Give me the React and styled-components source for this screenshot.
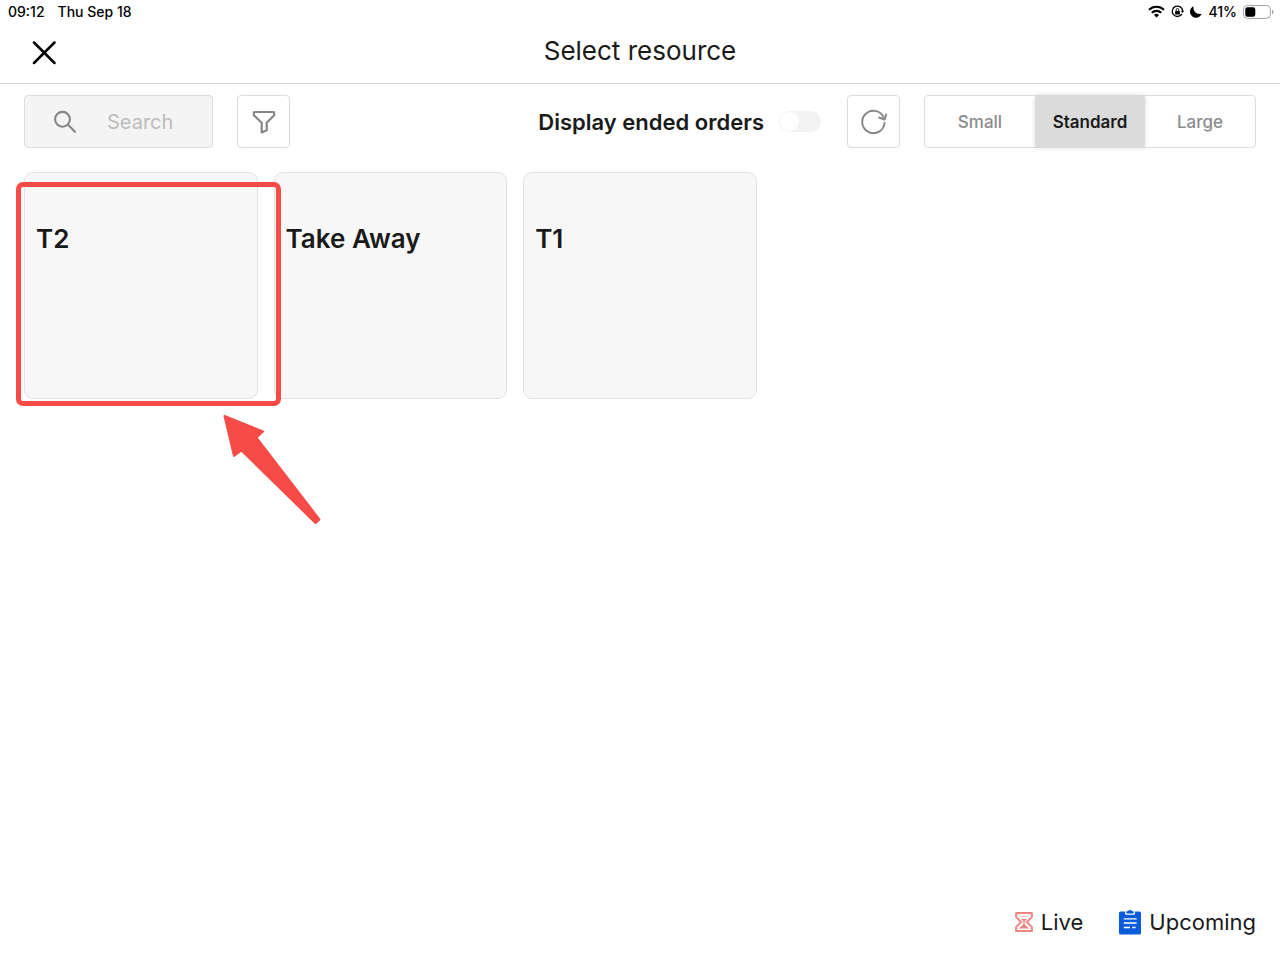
import React, { useState } from 'react';
import styled, { createGlobalStyle } from 'styled-components';

const GlobalStyle = createGlobalStyle`
  * {
    box-sizing: border-box;
  }
  body {
    margin: 0;
    background: #fff;
    color: #1a1a1a;
    font-family: Inter, 'Liberation Sans', sans-serif;
  }
  button, input {
    font-family: inherit;
  }
`;

const Page = styled.div`
  display: flex;
  flex-direction: column;
  min-height: 100vh;
`;

const StatusBar = styled.div`
  display: flex;
  align-items: center;
  justify-content: space-between;
  height: 23px;
  padding: 0 6px 0 8px;
  color: #000;
  font-size: 14px;
  font-weight: 500;
`;

const StatusGroup = styled.div`
  display: flex;
  align-items: center;
  gap: ${props => props.$gap}px;
`;

const Header = styled.header`
  display: grid;
  grid-template-columns: 1fr auto 1fr;
  align-items: center;
  height: 61px;
  padding: 0 32px;
  border-bottom: 1px solid #d4d4d4;
`;

const Title = styled.h1`
  margin: 0;
  padding-bottom: 4px;
  font-size: 26px;
  font-weight: 400;
  line-height: 32px;
`;

const CloseButton = styled.button`
  display: flex;
  justify-self: start;
  padding: 0;
  border: 0;
  background: none;
  color: #000;
  cursor: pointer;
`;

const Toolbar = styled.div`
  display: flex;
  align-items: center;
  justify-content: space-between;
  padding: 11px 24px 24px;
`;

const ToolGroup = styled.div`
  display: flex;
  align-items: center;
  gap: 24px;
`;

const SearchBox = styled.label`
  display: flex;
  align-items: center;
  gap: 30px;
  width: 189px;
  height: 53px;
  padding-left: 28px;
  border: 1px solid #dcdcdc;
  border-radius: 4px;
  background: #f4f4f4;
  color: #858585;
  svg {
    flex: none;
  }
`;

const SearchInput = styled.input`
  flex: 1;
  min-width: 0;
  padding: 0;
  border: 0;
  outline: 0;
  background: none;
  color: #1a1a1a;
  font-size: 20px;
  &::placeholder {
    color: #bcbcbc;
    opacity: 1;
  }
`;

const IconButton = styled.button`
  display: flex;
  align-items: center;
  justify-content: center;
  width: 53px;
  height: 53px;
  padding: 0;
  border: 1px solid #dcdcdc;
  border-radius: 4px;
  background: #fff;
  color: #858585;
  cursor: pointer;
`;

const SwitchLabel = styled.label`
  display: flex;
  align-items: center;
  gap: 15px;
  margin-right: 2px;
  font-size: 22px;
  font-weight: 600;
`;

const Switch = styled.input`
  display: flex;
  align-items: center;
  appearance: none;
  width: 42px;
  height: 21px;
  margin: 0;
  padding: 1px;
  border-radius: 11px;
  background: #f3f3f3;
  cursor: pointer;
  &::before {
    content: '';
    width: 19px;
    height: 19px;
    border-radius: 50%;
    background: #fff;
  }
  &:checked {
    justify-content: flex-end;
    background: #0b5cdb;
  }
`;

const Segments = styled.div`
  display: grid;
  grid-template-columns: repeat(3, 1fr);
  width: 332px;
  height: 53px;
  border: 1px solid #dcdcdc;
  border-radius: 4px;
`;

const Segment = styled.button`
  margin: ${props => (props.$active ? '-1px 0' : '0')};
  padding: 0;
  border: 0;
  border-radius: 4px;
  background: ${props => (props.$active ? '#dbdbdb' : 'none')};
  box-shadow: ${props => (props.$active ? '0 0 5px rgba(0, 0, 0, 0.14)' : 'none')};
  color: ${props => (props.$active ? '#1a1a1a' : '#8c8c8c')};
  font-size: 17px;
  font-weight: ${props => (props.$active ? 600 : 500)};
  cursor: pointer;
`;

const ResourceGrid = styled.main`
  display: grid;
  grid-template-columns: repeat(5, 1fr);
  gap: 16px;
  padding: 0 24px;
`;

const ResourceCell = styled.div`
  position: relative;
  display: flex;
`;

const ResourceCard = styled.button`
  flex: 1;
  display: flex;
  min-height: 227px;
  padding: 48px 11px;
  border: 1px solid #e2e2e2;
  border-radius: 9px;
  background: #f7f7f7;
  color: #1a1a1a;
  font-size: 26px;
  font-weight: 600;
  line-height: 36px;
  text-align: left;
  cursor: pointer;
`;

// sits over the card and its neighbour's edge
const Highlight = styled.div`
  position: absolute;
  z-index: 1;
  top: 10px;
  right: -23px;
  bottom: -7px;
  left: -8px;
  border: 5px solid #f64b47;
  border-radius: 7px;
  pointer-events: none;
`;

const Arrow = styled.svg`
  position: absolute;
  z-index: 1;
  top: 242px;
  left: 198px;
  pointer-events: none;
`;

const Footer = styled.footer`
  display: flex;
  justify-content: flex-end;
  gap: 36px;
  margin-top: auto;
  padding: 0 24px 22px;
`;

const FooterButton = styled.button`
  display: flex;
  align-items: center;
  gap: 8px;
  padding: 0;
  border: 0;
  background: none;
  color: #1a1a1a;
  font-size: 22px;
  line-height: 32px;
  cursor: pointer;
`;

const WifiIcon = () => (
  <svg width="17" height="13" viewBox="0 0 17 13" fill="none" stroke="#000" strokeWidth="2.2">
    <path d="M1 4.8a10.7 10.7 0 0 1 15 0" />
    <path d="M3.8 7.8a6.7 6.7 0 0 1 9.4 0" />
    <path d="M8.5 12.6 6 10a3.6 3.6 0 0 1 5 0z" fill="#000" stroke="none" />
  </svg>
);

const LockIcon = () => (
  <svg width="13" height="13" viewBox="0 0 13 13" fill="none" stroke="#000">
    <path d="M11 8.9A5.2 5.2 0 1 1 11.7 6" strokeWidth="1.3" />
    <path d="M9.9 5.7h3.4l-1.7 2.2z" fill="#000" stroke="none" />
    <rect x="4.1" y="5.9" width="4.8" height="3.6" rx="0.6" fill="#000" stroke="none" />
    <path d="M5.2 6V4.8a1.3 1.3 0 0 1 2.6 0V6" strokeWidth="0.9" />
  </svg>
);

const MoonIcon = () => (
  <svg width="12" height="12" viewBox="0 0 12 12">
    <path d="M3.6.2C2.6 4.600 6 8.900 11.600 7.800A6 6 0 1 1 3.600.2z" fill="#000" />
  </svg>
);

const BatteryIcon = () => (
  <svg width="31" height="14" viewBox="0 0 31 14">
    <rect x="0.6" y="0.6" width="26.8" height="12.8" rx="4" fill="none" stroke="#a0a0a0" />
    <rect x="2.3" y="2.3" width="10" height="9.4" rx="2.2" fill="#000" />
    <path d="M29 4.8c1.9.7 1.9 3.7 0 4.4z" fill="#a0a0a0" />
  </svg>
);

const CloseIcon = () => (
  <svg width="24" height="24" viewBox="0 0 24 24" fill="none" stroke="currentColor" strokeWidth="2.5" strokeLinecap="round">
    <path d="M2 1.5l20.500 20.500M22.500 1.500L2 22" />
  </svg>
);

const SearchIcon = () => (
  <svg width="24" height="24" viewBox="0 0 24 24" fill="none" stroke="currentColor" strokeWidth="2.1" strokeLinecap="round">
    <circle cx="9.5" cy="9.3" r="7.4" />
    <path d="M15 14.8l7 7" />
  </svg>
);

const FilterIcon = () => (
  <svg width="24" height="24" viewBox="0 0 24 24" fill="none" stroke="currentColor" strokeWidth="2.2" strokeLinejoin="round">
    <path d="M2.6 2h18.8q.8 0 .8.8v2.4L14.700 12.8v7.4L9.700 22.4v-9.600L1.800 5.200V2.800q0-.8.800-.8z" />
  </svg>
);

const RefreshIcon = () => (
  <svg width="28" height="26" viewBox="0 0 28 26" fill="none" stroke="currentColor" strokeWidth="1.9" strokeLinecap="round" strokeLinejoin="round">
    <path d="M24.600 14A11.200 11.200 0 1 1 23.400 7.800" />
    <path d="M19.200 8.500l5.400 2 1.600-5" />
  </svg>
);

const HourglassIcon = () => (
  <svg width="18" height="20" viewBox="0 0 18 20" fill="none" stroke="#ee8780" strokeLinejoin="round">
    <path d="M1.100 1.100h15.800v4L11.800 10l5.100 4.900v4H1.100v-4L6.200 10 1.100 5.100z" strokeWidth="2" />
    <path d="M5.500 4.500h7" strokeWidth="1" opacity="0.500" />
    <path d="M6 7h6L9 9.800z" fill="#ee8780" stroke="none" />
    <path d="M9 9v3" strokeWidth="1.400" />
    <path d="M9 11.400l5 5.100H4z" fill="#ee8780" stroke="none" />
  </svg>
);

const ClipboardIcon = () => (
  <svg width="22" height="25" viewBox="0 0 22 25">
    <rect y="1.500" width="22" height="23" rx="1.600" fill="#0b5cdb" />
    <path d="M6 0h10v3.200q0 1.600-1.600 1.600H7.600Q6 4.800 6 3.200z" fill="#fff" />
    <path d="M7.200 1.200h1.700Q9.400 0 11 0t2.100 1.200h1.700v1.600q0 .8-.8.8H8q-.8 0-.8-.8z" fill="#0b5cdb" />
    <path d="M4.800 8.800h12.900M4.800 13h12.900M4.800 17.500h6.200M13.200 17.500h3.400" stroke="#fff" strokeWidth="1.300" />
  </svg>
);

const sizes = ['Small', 'Standard', 'Large'];
const resources = ['T2', 'Take Away', 'T1'];

const App = () => {
  const [size, setSize] = useState('Standard');

  return (
    <Page>
      <GlobalStyle />
      <StatusBar>
        <StatusGroup $gap={13}>
          <span>09:12</span>
          <span>Thu Sep 18</span>
        </StatusGroup>
        <StatusGroup $gap={6}>
          <WifiIcon />
          <LockIcon />
          <MoonIcon />
          <span>41%</span>
          <BatteryIcon />
        </StatusGroup>
      </StatusBar>

      <Header>
        <CloseButton aria-label="Close">
          <CloseIcon />
        </CloseButton>
        <Title>Select resource</Title>
      </Header>

      <Toolbar>
        <ToolGroup>
          <SearchBox>
            <SearchIcon />
            <SearchInput type="text" placeholder="Search" aria-label="Search" />
          </SearchBox>
          <IconButton aria-label="Filter">
            <FilterIcon />
          </IconButton>
        </ToolGroup>
        <ToolGroup>
          <SwitchLabel>
            Display ended orders
            <Switch type="checkbox" />
          </SwitchLabel>
          <IconButton aria-label="Refresh">
            <RefreshIcon />
          </IconButton>
          <Segments role="group" aria-label="Card size">
            {sizes.map(name => (
              <Segment
                key={name}
                $active={name === size}
                aria-pressed={name === size}
                onClick={() => setSize(name)}
              >
                {name}
              </Segment>
            ))}
          </Segments>
        </ToolGroup>
      </Toolbar>

      <ResourceGrid>
        {resources.map(name => (
          <ResourceCell key={name}>
            <ResourceCard>{name}</ResourceCard>
            {name === 'T2' && (
              <>
                <Highlight />
                <Arrow width="100" height="112" viewBox="0 0 100 112">
                  <path
                    d="M2.5 2L41 17.5 34.5 23.5 97.5 105.5 93.5 109 19.5 36.5 12 42z"
                    fill="#f64b47"
                    stroke="#f64b47"
                    strokeWidth="2"
                    strokeLinejoin="round"
                  />
                </Arrow>
              </>
            )}
          </ResourceCell>
        ))}
      </ResourceGrid>

      <Footer>
        <FooterButton>
          <HourglassIcon />
          Live
        </FooterButton>
        <FooterButton>
          <ClipboardIcon />
          Upcoming
        </FooterButton>
      </Footer>
    </Page>
  );
};

export default App;
